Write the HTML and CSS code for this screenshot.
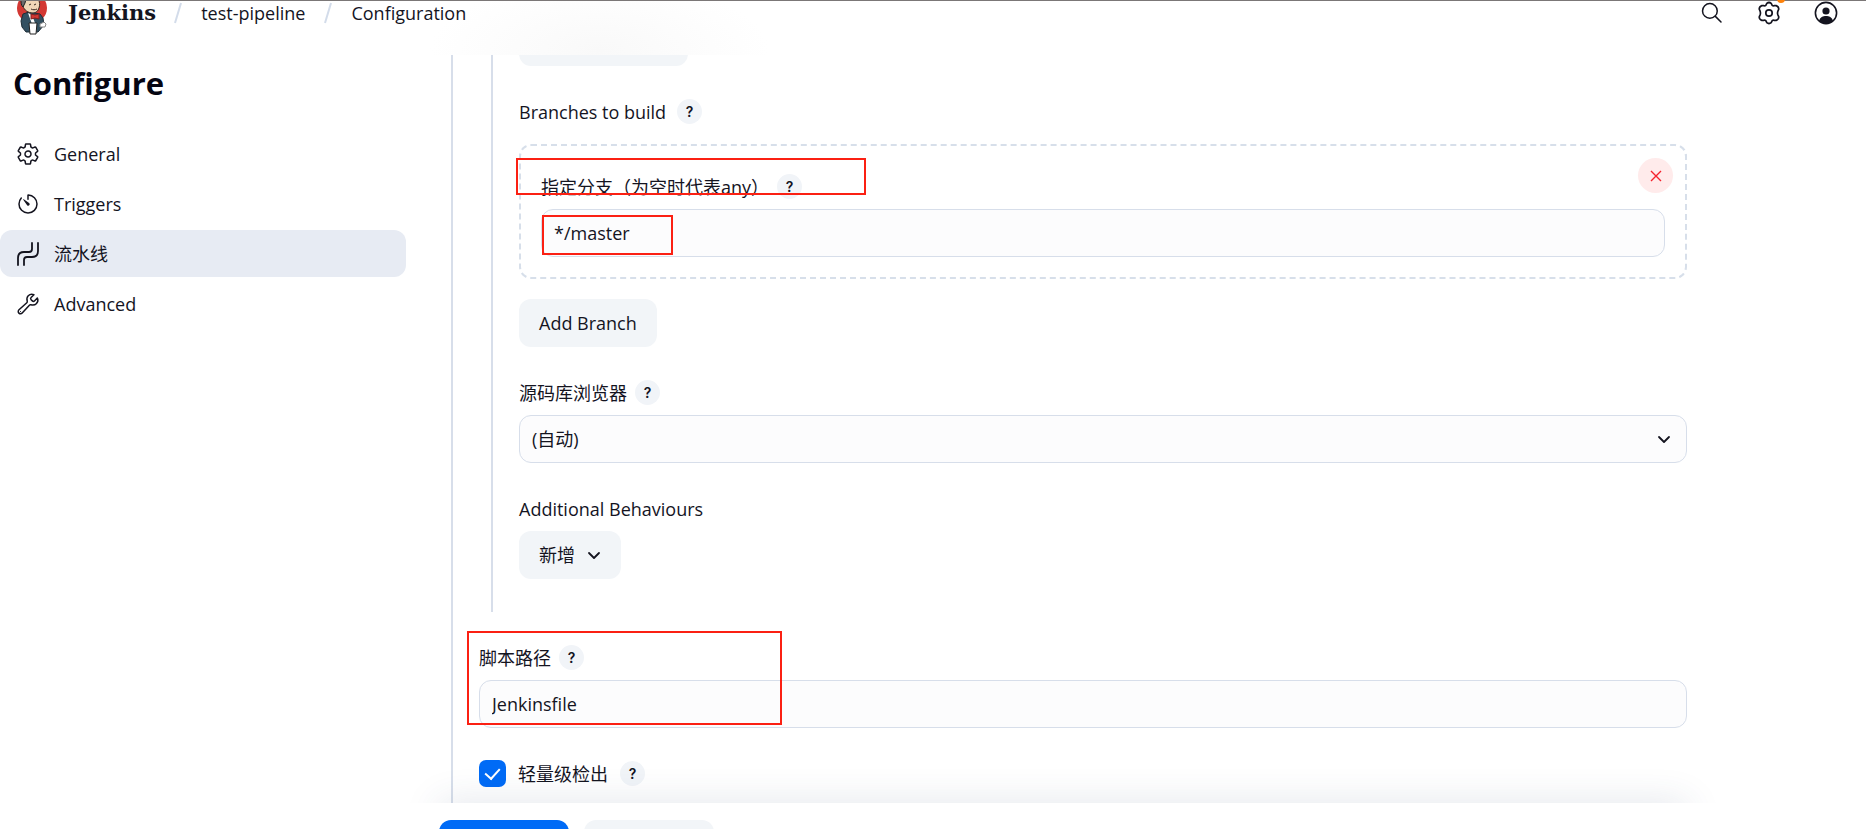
FILE: index.html
```html
<!DOCTYPE html>
<html lang="zh-CN">
<head>
    <meta charset="UTF-8">
    <meta name="viewport" content="width=device-width, initial-scale=1.0">
    <title>test-pipeline Config [Jenkins]</title>
    <link rel="stylesheet" href="styles.css">
</head>
<body>
    <!-- Header -->
    <header class="header">
        <a href="#" class="brand">
            <svg class="logo" viewBox="0 0 32 36">
                <circle cx="16" cy="7" r="15" fill="#d33833"/>
                <path d="M7 13l6-2 11 2 3 4 1 7-6 7-12 0-4-5-1-6z" fill="#335061" stroke="#1d2c36"/>
                <path d="M6-2h16c2 3 2 6 1 9-1 3-3 5-6 5-5 0-9-3-10-7z" fill="#f0d6b7" stroke="#3b2a22"/>
                <path d="M5-2c0 4 0 6 2 8l2-4 1-4z" fill="#6d6b6d" stroke="#222"/>
                <path d="M13 4l2-1M18 4l2-1M15 8c2 1 4 1 6 0" fill="none" stroke="#3b2a22"/>
                <path d="M12 12l4 2 3 8-3 1z" fill="#fff"/>
                <path d="M15 13l4 1 4-1v5l-4-1-4 1z" fill="#d33833" stroke="#81201e"/>
                <path d="M13 22h8l-1 11h-6z" fill="#fff" stroke="#222"/>
                <path d="M24 23l4-2 2 2-1 3-5 0z" fill="#fff" stroke="#888"/>
            </svg>
            <span>Jenkins</span>
        </a>
        <nav class="crumbs">
            <svg class="slash" viewBox="0 0 8 22"><path d="M7 1L1 21"/></svg>
            <a href="#">test-pipeline</a>
            <svg class="slash" viewBox="0 0 8 22"><path d="M7 1L1 21"/></svg>
            <a href="#">Configuration</a>
        </nav>
        <div class="tools">
            <button class="tool">
                <svg class="icon" viewBox="0 0 512 512"><path d="M211 54a157 157 0 10157 157A157 157 0 00211 54z"/><path d="M328 328l120 120"/></svg>
            </button>
            <button class="tool">
                <svg class="icon" viewBox="0 0 24 24"><g stroke-width="1.7"><path d="M9.8 2.4Q12 .6 14.2 2.4L15.2 4.3Q16 5 17 4.7L19.2 4.6Q21.6 5.4 21.8 8L20.8 10.4Q20.3 12 20.8 13.6L21.8 16Q21.6 18.6 19.2 19.4L17 19.3Q16 19 15.2 19.7L14.2 21.6Q12 23.4 9.8 21.6L8.800 19.7Q8 19 7 19.3L4.800 19.4Q2.400 18.6 2.200 16L3.200 13.6Q3.700 12 3.200 10.4L2.200 8Q2.400 5.4 4.800 4.600L7 4.700Q8 5 8.800 4.300z"/><circle cx="12" cy="12" r="3.2"/></g></svg>
                <span class="dot"></span>
            </button>
            <button class="tool">
                <svg class="icon" viewBox="0 0 24 24"><circle cx="12" cy="12" r="10.6" stroke-width="1.6"/><circle class="solid" cx="12" cy="10" r="3.6"/><path class="solid" d="M5 20c1-4 4-5 7-5s6 1 7 5c-4 3.500-10 3.500-14 0z"/></svg>
            </button>
        </div>
    </header>

    <div class="page">
        <!-- Side panel -->
        <aside class="side">
            <h1>Configure</h1>
            <nav class="tasks">
                <a href="#" class="task">
                    <svg class="icon" viewBox="0 0 512 512"><path d="M262.290 192.310a64 64 0 1057.400 57.400 64.130 64.130 0 00-57.400-57.400zM416.390 256a154.340 154.340 0 01-1.530 20.790l45.210 35.460a10.810 10.810 0 012.450 13.750l-42.770 74a10.810 10.810 0 01-13.140 4.590l-44.900-18.080a16.110 16.110 0 00-15.170 1.750A164.480 164.480 0 01325 400.800a15.940 15.940 0 00-8.820 12.140l-6.730 47.890a11.080 11.080 0 01-10.680 9.170h-85.540a11.110 11.110 0 01-10.690-8.870l-6.720-47.820a16.070 16.070 0 00-9-12.220 155.300 155.300 0 01-21.460-12.570 16 16 0 00-15.110-1.710l-44.890 18.070a10.810 10.810 0 01-13.140-4.580l-42.770-74a10.800 10.800 0 012.450-13.750l38.210-30a16.050 16.050 0 006-14.080c-.36-4.170-.58-8.330-.58-12.500s.21-8.270.58-12.350a16 16 0 00-6.070-13.940l-38.190-30A10.810 10.810 0 0149.480 186l42.770-74a10.810 10.810 0 0113.140-4.590l44.900 18.080a16.110 16.110 0 0015.170-1.750A164.480 164.480 0 01187 111.200a15.940 15.940 0 008.820-12.140l6.730-47.890A11.080 11.080 0 01213.230 42h85.540a11.110 11.110 0 0110.690 8.870l6.720 47.820a16.070 16.070 0 009 12.220 155.300 155.300 0 0121.460 12.570 16 16 0 0015.110 1.710l44.890-18.070a10.810 10.810 0 0113.140 4.580l42.770 74a10.800 10.800 0 01-2.450 13.750l-38.210 30a16.050 16.050 0 00-6.050 14.080c.33 4.140.55 8.300.55 12.470z"/></svg>
                    <span>General</span>
                </a>
                <a href="#" class="task">
                    <svg class="icon" viewBox="0 0 512 512"><path d="M112.910 128A191.850 191.850 0 0064 254c-1.180 106.350 85.650 193.800 192 194 106.200.2 192-85.830 192-192 0-104.540-83.550-189.610-187.500-192a4.360 4.360 0 00-4.500 4.370V152"/><path class="solid" d="M233.380 278.630l-79-113a8.130 8.130 0 0111.320-11.320l113 79a32.500 32.500 0 01-37.250 53.260 33.210 33.210 0 01-8.070-7.940z"/></svg>
                    <span>Triggers</span>
                </a>
                <a href="#" class="task active">
                    <svg class="icon" viewBox="0 0 24 24"><g stroke-width="1.8"><path d="M2 23v-7q0-6 6-6h5q3 0 3-3V1"/><path d="M8 23v-5q0-3 3-3h5q6 0 6-6V1"/></g></svg>
                    <span>流水线</span>
                </a>
                <a href="#" class="task">
                    <svg class="icon" viewBox="0 0 512 512"><path d="M393.870 190a32.100 32.100 0 01-45.250 0l-26.570-26.570a32.090 32.090 0 010-45.260L382.190 58a1 1 0 00-.3-1.640c-38.820-16.640-89.150-8.160-121.110 23.570-30.580 30.350-32.320 76-21.120 115.840a31.930 31.930 0 01-9.060 32.080L64 380a48.170 48.170 0 1068 68l153.860-167a31.930 31.930 0 0131.600-9.130c39.540 10.590 84.540 8.600 114.720-21.190 32.490-32 39.500-88.560 23.750-120.930a1 1 0 00-1.600-.26z"/><circle class="solid" cx="96" cy="416" r="12"/></svg>
                    <span>Advanced</span>
                </a>
            </nav>
        </aside>

        <!-- Config form -->
        <main class="content">
            <form class="form">
                <section class="nested">
                    <button type="button" class="btn btn-scrolled"></button>

                    <div class="label-row wide">
                        <span>Branches to build</span>
                        <button type="button" class="help">?</button>
                    </div>
                    <div class="chunk">
                        <button type="button" class="remove">
                            <svg viewBox="0 0 12 12"><path d="M1 1l10 10M11 1L1 11"/></svg>
                        </button>
                        <div class="label-row">
                            <label for="branch">指定分支（为空时代表any）</label>
                            <button type="button" class="help">?</button>
                        </div>
                        <input type="text" id="branch" class="input" value="*/master">
                        <span class="mark mark-label"></span>
                        <span class="mark mark-value"></span>
                    </div>
                    <button type="button" class="btn">Add Branch</button>

                    <div class="label-row spaced">
                        <label for="browser">源码库浏览器</label>
                        <button type="button" class="help">?</button>
                    </div>
                    <div class="select">
                        <select id="browser" class="input"><option>(自动)</option></select>
                        <svg class="chevron" viewBox="0 0 14 14"><path d="M2 5l5 5 5-5"/></svg>
                    </div>

                    <div class="label-row spaced">Additional Behaviours</div>
                    <button type="button" class="btn">新增 <svg class="chevron" viewBox="0 0 14 14"><path d="M2 5l5 5 5-5"/></svg></button>
                </section>

                <section class="script">
                    <div class="label-row">
                        <label for="script">脚本路径</label>
                        <button type="button" class="help">?</button>
                    </div>
                    <input type="text" id="script" class="input" value="Jenkinsfile">
                    <span class="mark mark-script"></span>
                </section>

                <div class="check-row">
                    <input type="checkbox" id="light" class="checkbox" checked>
                    <label for="light">轻量级检出</label>
                    <button type="button" class="help">?</button>
                </div>
            </form>

            <div class="bottom-bar">
                <button type="button" class="btn btn-primary"></button>
                <button type="button" class="btn"></button>
            </div>
        </main>
    </div>
</body>
</html>
```
FILE: styles.css
```css
* { box-sizing: border-box; }
body { margin: 0; height: 100vh; overflow: hidden; display: flex; flex-direction: column; background: #fff; color: #14141f; font-family: "Open Sans", "Noto Sans CJK SC", sans-serif; font-size: 18px; line-height: 24px; }
a { color: inherit; text-decoration: none; }
button, input, select { font: inherit; color: inherit; }
button { border: none; padding: 0; cursor: pointer; }
.icon { width: 24px; height: 24px; fill: none; stroke: currentColor; stroke-width: 32; stroke-linecap: round; stroke-linejoin: round; display: block; flex: none; }
.icon .solid { fill: currentColor; stroke: none; }

/* header */
.header { height: 55px; flex: none; display: flex; align-items: flex-start; padding: 0 28px 0 16px; border-top: 1px solid #7b7777; background: radial-gradient(ellipse 170px 70px at 600px 50px, #f9f9f9, #fff); position: relative; z-index: 2; }
.brand { display: flex; gap: 20px; font-family: "DejaVu Serif", serif; font-weight: bold; font-size: 21px; }
.logo { width: 32px; height: 36px; }
.crumbs { display: flex; align-items: center; gap: 19px; margin-left: 18px; }
.slash { width: 8px; height: 22px; fill: none; stroke: #d3dcea; stroke-width: 2; }
.tools { display: flex; gap: 33px; margin-left: auto; }
.tool { position: relative; background: none; }
.dot { position: absolute; top: -6px; right: -4px; width: 8px; height: 8px; border-radius: 50%; background: #fe820a; clip-path: inset(5px 0 0 0); }

/* side panel */
.page { flex: 1; min-height: 0; display: flex; }
.side { width: 406px; flex: none; }
.side h1 { margin: 8px 0 27px 13px; font-size: 31px; line-height: 40px; font-weight: bold; color: #050512; }
.tasks { display: flex; flex-direction: column; gap: 3px; }
.task { display: flex; align-items: center; gap: 14px; height: 47px; padding: 0 16px; border-radius: 12px; }
.task.active { background: #e7ebf3; }

/* form */
.content { flex: 1; min-width: 0; display: flex; flex-direction: column; }
.form { flex: 1; min-height: 0; overflow: hidden; margin: 0 179px 0 45px; padding-left: 26px; border-left: 2px solid #d7deea; }
.nested { margin-left: 12px; padding: 0 0 33px 26px; border-left: 2px solid #d7deea; }
.label-row { display: flex; align-items: center; gap: 8px; height: 25px; margin-bottom: 10px; }
.wide { gap: 11px; }
.spaced { margin-top: 33px; }
.help { width: 25px; height: 25px; border-radius: 50%; background: #f1f4f8; font-family: Inter, sans-serif; font-size: 14px; line-height: 25px; font-weight: 600; text-align: center; }
.btn { display: flex; align-items: center; gap: 12px; height: 48px; padding: 0 20px; border-radius: 12px; background: #f2f5f8; }
.btn-scrolled { width: 169px; margin: -37px 0 33px; }
.input { display: block; width: 100%; height: 48px; padding: 0 12px; border: 1px solid #d7deea; border-radius: 12px; background: #fcfcfd; appearance: none; }
.chunk { position: relative; margin: 20px 0; padding: 28px 20px 20px; border: 2px dashed #d7dfea; border-radius: 12px; }
.remove { position: absolute; top: 12px; right: 12px; width: 35px; height: 35px; display: flex; align-items: center; justify-content: center; border-radius: 50%; background: #ffebeb; }
.remove svg { width: 12px; height: 12px; fill: none; stroke: #f5222d; stroke-width: 1.4; }
.select { position: relative; }
.chevron { width: 14px; height: 14px; fill: none; stroke: #14141f; stroke-width: 1.8; stroke-linecap: round; stroke-linejoin: round; }
.select .chevron { position: absolute; top: 17px; right: 16px; pointer-events: none; }
.script { position: relative; margin: 33px 0 32px; }
.check-row { display: flex; align-items: center; gap: 12px; }
.checkbox { width: 27px; height: 27px; margin: 0; border-radius: 7px; appearance: none; background: #006bf6; display: flex; align-items: center; justify-content: center; }
.checkbox:checked::before { content: ""; width: 7px; height: 12px; margin-bottom: 3px; border: solid #fff; border-width: 0 2px 2px 0; transform: rotate(42deg); }

/* red annotation frames */
.mark { position: absolute; border: 2px solid #fb2013; pointer-events: none; }
.mark-label { top: 12px; left: -5px; width: 350px; height: 37px; }
.mark-value { top: 69px; left: 21px; width: 131px; height: 40px; }
.mark-script { top: -14px; left: -12px; width: 315px; height: 94px; }

/* bottom bar */
.bottom-bar { position: relative; height: 26px; flex: none; display: flex; gap: 15px; padding: 17px 179px 0 33px; background: #fff; }
.bottom-bar::before { content: ""; position: absolute; inset: 0 179px 0 33px; box-shadow: 0 0 36px rgba(50, 70, 110, .15); clip-path: inset(-40px -40px 100% -40px); pointer-events: none; }
.bottom-bar .btn { width: 130px; }
.bottom-bar .btn-primary { background: #006bf6; }
```
